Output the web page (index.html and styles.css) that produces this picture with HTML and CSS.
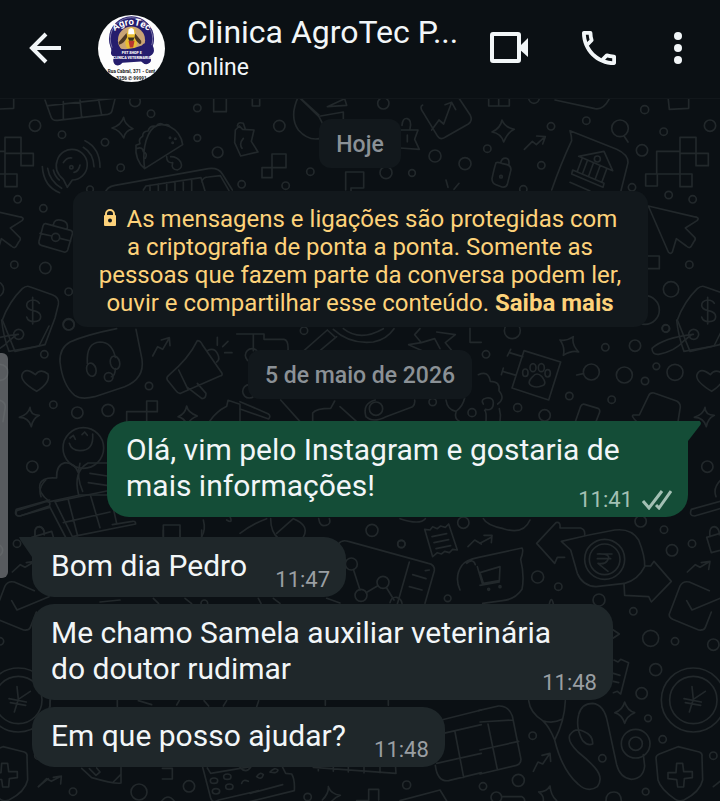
FILE: index.html
```html
<!DOCTYPE html>
<html lang="pt-BR">
<head>
    <meta charset="UTF-8">
    <meta name="viewport" content="width=device-width, initial-scale=1.0">
    <title>Clinica AgroTec</title>
    <link rel="stylesheet" href="styles.css">
</head>
<body>
    <div class="app">
        <!-- wallpaper: one set of doodles, repeated to the left -->
        <svg class="wallpaper" viewBox="0 0 2160 2403" preserveAspectRatio="xMidYMid slice" aria-hidden="true">
            <g id="doodles">
                <!-- top left -->
                <g transform="translate(0 270)">
                    <path d="M135 30l18 50q5 13 20 11l150-18q12-2 14-14l10-40M190 35v55M240 30l5 52M295 25l10 50M145 47l195-22"/>
                    <circle cx="405" cy="34" r="16"/><circle cx="453" cy="71" r="11"/><circle cx="592" cy="54" r="11"/>
                    <path d="M641 20h38v45h-38z"/>
                    <circle cx="186" cy="134" r="11"/><circle cx="315" cy="157" r="11"/>
                    <path d="M371 82q3 22 28 34q-24 6-28 28q-12-24-35-30q28-8 35-32z"/>
                    <path d="M190 268q-30-25-18-58a46 46 0 1 1 45 60l-15 22zM190 218q10-16 25-14M240 225q-4 20-18 22M127 230q4 60 52 78M143 235q6 38 42 60M160 240q5 20 18 30M255 152q45 22 45 80M250 172q30 18 32 58"/>
                    <circle cx="214" cy="232" r="5"/>
                    <path d="M434 236L548 164q-5-38-38-54q-60-25-76 60q-5 30 0 66zM434 236q-30-25-26-70l12-5q-6-14 8-22q0-16 16-16q6-18 24-14q10-14 24-4q14-4 18 6M412 175q16-5 18 10q14 5 6 20"/>
                    <circle cx="510" cy="143" r="2"/><circle cx="526" cy="146" r="2"/><circle cx="518" cy="158" r="2"/>
                    <path d="M500 200q0 20 18 18q-6 20 14 22q18-6 10-24q-10-16-30-16"/>
                    <circle cx="592" cy="144" r="10"/><circle cx="653" cy="187" r="16"/><circle cx="362" cy="233" r="11"/><circle cx="270" cy="298" r="10"/>
                    <path d="M315 310q5-20 30-24l280-50q30-4 42 16l30 48M430 300l8-12 165-25 12 40M450 286v20M475 282v22M500 278v24M525 275v28M550 271v30M575 267v36M605 275q5-14 20-14l36-4 26 45"/>
                    <circle cx="130" cy="355" r="11"/>
                    <path d="M137 401l75 20q7 3 5 11l-14 48q-3 8-11 6l-68-20q-9-3-7-12l12-46q2-8 8-7zM160 405q2-20 26-14q20 4 16 26M120 430l35 8M180 445l32 8"/>
                    <circle cx="167" cy="442" r="12"/><circle cx="136" cy="534" r="17"/><circle cx="206" cy="605" r="11"/><circle cx="206" cy="703" r="17"/>
                </g>
                <!-- top middle -->
                <g transform="translate(720 270)">
                    <path d="M37 20v28h22V20M262 50l52-24 6 20zM175 20q-28 60 0 100q40 45 90 15l-28-55zM237 75l-55-50M242 78l68-12v60l-60 18"/>
                    <circle cx="430" cy="40" r="17"/><circle cx="118" cy="108" r="17"/>
                    <path d="M548 45q-10 5 0 20l45 74q8 12 22 3l70-40q14-10 6-26l-40-60M575 120l22-30 14 12 24-65M615 44l20-7 12 22"/>
                    <path d="M-14 120l12-12 10 10 34 2-8 34 20 32-52 12-18-40zM-8 108q2-14 18-8l6 18M10 145q-14 16-4 30"/>
                    <path d="M480 120l54 0-10 28 14 30-58-4M486 106q2-24 16-20q14 4 8 30M502 135v20"/>
                    <path d="M96 192h42v41H96zM66 233h30v30H66zM317 300v-54h54v48h-38v20"/>
                    <circle cx="211" cy="245" r="11"/><circle cx="137" cy="287" r="11"/><circle cx="5" cy="283" r="11"/><circle cx="438" cy="248" r="18"/><circle cx="585" cy="198" r="18"/><circle cx="675" cy="221" r="18"/><circle cx="516" cy="249" r="10"/>
                    <path d="M618 270l6 22M642 298l15-18"/>
                </g>
                <!-- top right -->
                <g transform="translate(1440 270)">
                    <path d="M26 20v28h62V20M56 20v28M225 30l120 26q25 4 42-28M564 20l4 38 58-3V20"/>
                    <circle cx="162" cy="24" r="16"/><circle cx="494" cy="59" r="12"/><circle cx="319" cy="92" r="11"/><circle cx="213" cy="109" r="11"/><circle cx="22" cy="176" r="11"/><circle cx="184" cy="226" r="11"/>
                    <path d="M66 90q8 22 37 28q-20 8-32 38q-8-26-35-30q26-12 30-36z"/>
                    <path d="M133 178l24-24 12 10 26-24M170 138l26 2-8 22"/>
                    <path d="M48 218q-6 18-12 48q0 14 12 18l18 7q12 2 16-8l11-44q0-12-12-15l-16-4q-12-4-17-2zM62 218q4-16 18-13q10 4 6 22"/>
                    <circle cx="63" cy="260" r="4"/><circle cx="130" cy="298" r="11"/>
                    <path d="M215 300q28-80 60-148q0-14-5-30l140 56q35 16 34 40l-22 88M270 277l60 26M296 199l76-15 26 58zM278 240l94 40-3 12-94-40zM306 206l-14 38M322 212l-14 38M340 220l-14 38M360 228l-14 38M380 237l-14 38"/>
                    <circle cx="352" cy="207" r="9"/>
                    <circle cx="420" cy="115" r="25"/><path d="M432 138l12 18"/>
                    <circle cx="551" cy="125" r="11"/><circle cx="690" cy="107" r="17"/><circle cx="486" cy="181" r="17"/><circle cx="456" cy="292" r="11"/>
                    <path d="M530 252v-68h70v68M600 142h48v48h-48zM648 190h37v37h-37zM497 252h35v36h-35zM600 184v106h36v-38H530"/>
                    <circle cx="566" cy="315" r="11"/><circle cx="638" cy="328" r="11"/>
                    <path d="M505 348l136 32q20 2 10 12l-35 22 28 28q5 6-3 14l-8 14q-6 6-14-2l-30-22-12 40q-5 8-12 0z"/>
                    <path d="M500 498h38v38h-38"/>
                    <circle cx="628" cy="524" r="11"/><circle cx="573" cy="598" r="23"/><circle cx="495" cy="660" r="43"/>
                    <path d="M592 690q20-55 60-94q12-10 22-6l68 24q22 8 18 30l-10 40-30 80-90 20z"/>
                    <path d="M703 640q-6-10-20-10q-18 2-18 16q0 12 20 16q22 4 22 18q0 14-20 15q-18 0-22-14M683 622v80"/>
                    <circle cx="558" cy="716" r="11"/>
                </g>
                <!-- middle left -->
                <g transform="translate(0 960)">
                    <circle cx="206" cy="14" r="16"/><circle cx="133" cy="103" r="11"/><circle cx="160" cy="254" r="11"/><circle cx="232" cy="278" r="17"/><circle cx="324" cy="271" r="18"/><circle cx="447" cy="198" r="11"/><circle cx="140" cy="367" r="11"/>
                    <path d="M350 26q-90 18-140 40q-32 18-30 60q8 70 44 100q20 14 60 4l90-30q60-24 52-82l-18-90M262 130q-4-62 38-64q36 0 46 46M346 146q0 20-12 24"/>
                    <ellipse cx="274" cy="149" rx="14" ry="20" transform="rotate(-15 274 149)"/><ellipse cx="345" cy="128" rx="14" ry="20" transform="rotate(-15 345 128)"/><circle cx="326" cy="171" r="13"/>
                    <path d="M458 108l15-28 15 8 20-34M484 60l24-7 2 24"/>
                    <path d="M592 62q10 0 16 14l58 84q2 8-6 8l-118 52q-8 2-14-8l-26-32q-4-8 4-14q60-50 86-104zM536 150l28 58M562 202l44 34q12 0 12-16l-26-30M622 92q20-10 30 8q10 18-2 26M652 52v24M668 80l16-16M674 98h22"/>
                    <path d="M380 305v-30h60v-32h32v32h-32v30M560 258q4 20 32 30q-20 8-26 20M560 258q-4 24-26 32q20 6 24 20M628 305q20-30 52-46l4-18 36 12v52"/>
                    <circle cx="250" cy="384" r="61"/><path d="M208 370q6 22 32 22q42 0 38-50M210 354l10-8 6 12M246 344l8-8 8 10"/>
                    <path d="M148 544q-36-26-28-52q8-22 50-18q-2-40 26-46q28 0 40 32M236 525q-18-70 28-96h60M240 430q-12 40 8 84M270 460l52 8M265 488l55 8M150 545l90-20 90 0"/>
                    <path d="M50 572l90-28q14 2 8 14l-88 30q-16 2-10-16zM148 558l50 96M165 545l52 105 190-38q0-10-10-8l-60 10M165 545l170-35M190 608l140-32M205 540l28 108M272 528l28 95M330 520l20 90"/>
                    <path d="M490 650v-35h50v35M610 600q8 30-5 50M680 600q20 12 10-10"/>
                </g>
                <!-- centre -->
                <g transform="translate(720 960)">
                    <path d="M-10 42h82v16h60q14 2 12 34M40 42v50M262 30l-70 62M290 50l-50 42M262 30l24 22M280 28q50 46 120 38q40-8 62-40M310 26q50 40 120 0M540 26l-16 18 20 24-38 6 44 20M544 68l40-12 16 30M590 36l56 8-30 24 20 24M690 25v42h34"/>
                    <circle cx="192" cy="32" r="11"/><circle cx="36" cy="106" r="20"/><circle cx="28" cy="214" r="20"/>
                    <path d="M0 245l84 36q10 6 2 16l-86-30M122 240l58 65M218 305v-26q10-14 54-14l12-22M300 260l50 45M378 290q-12-40 28-50M378 290q20 20 60 0l80-30q8-8 6-20"/>
                    <circle cx="408" cy="266" r="20"/><circle cx="578" cy="246" r="11"/><path d="M618 240q4 30 30 34q20-14 26-40M648 276q-6 20 10 28"/><circle cx="696" cy="278" r="12"/>
                    <path d="M0 640q40-30 80-44M92 596q0 40 24 60M110 640l50-44q50 20 30 55M236 596q4 26 22 20q16-4 10-20M480 596q60 20 76 0"/>
                    <circle cx="396" cy="631" r="18"/><circle cx="484" cy="672" r="11"/><circle cx="670" cy="608" r="17"/>
                    <path d="M554 628l16 2 8-10 14 6 10-8 14 4 10-10 26 78-14-2-10 10-14-4-10 8-12-4-14 12zM576 650l44-9M582 668l44-9M588 686l44-9"/>
                </g>
                <!-- middle right -->
                <g transform="translate(1440 960)">
                    <circle cx="97" cy="32" r="24"/><circle cx="18" cy="103" r="11"/><circle cx="376" cy="82" r="11"/><circle cx="465" cy="77" r="17"/><circle cx="557" cy="25" r="11"/><circle cx="529" cy="139" r="10"/><circle cx="495" cy="183" r="11"/><circle cx="585" cy="157" r="24"/><circle cx="433" cy="165" r="24"/><circle cx="334" cy="156" r="24"/><circle cx="268" cy="228" r="11"/><circle cx="395" cy="239" r="11"/><circle cx="113" cy="263" r="12"/><circle cx="194" cy="286" r="17"/><circle cx="682" cy="440" r="17"/>
                    <path d="M132 92l110 34-36 114-110-36zM92 88l-10 20M88 98l40 12M70 144l-6 20M68 154l40 12M290 165l20-4M240 60q20 4 40-10q-6 24 16 46q-20-6-46 10q6-24-10-46"/>
                    <ellipse cx="159" cy="143" rx="9" ry="12"/><ellipse cx="184" cy="143" rx="9" ry="12"/><ellipse cx="136" cy="158" rx="8" ry="11"/><ellipse cx="203" cy="160" rx="8" ry="11"/>
                    <path d="M158 170q12-16 28 0q18 24-2 28q-14 6-28 0q-18-8 2-28z"/>
                    <path d="M590 0q5 50 22 94l90-16 30-60M640 43q-90 10-124 42q0 20 20 18q50-10 75-40l25-20"/><circle cx="641" cy="43" r="15"/>
                    <path d="M695 214q-50-30-44-50q10-24 40 0q16-20 38-2q8 26-34 52z"/>
                    <path d="M-5 164q30-14 36 20q30 0 26 28q20 24-4 40M16 268q24 6 24-20q0-16-20-14q-20 4-10 18M18 305q2-30-4-34M58 266q6 20 2 39"/>
                    <path d="M286 305l16-46q4-8 12-6l40 12q8 4 4 14l-10 26M470 305q-18-18-10-20l18 0 28-58q4-10 16-8l68 24q14 8 10 24l-6 38M675 262q-4 20-32 30q28 0 36 28q4-24 24-34q-28 0-28-24M722 480q-24 24-14 50M634 568l100-28M634 568q-8 20 10 20l90-26"/>
                    <path d="M10 596q10 20 60 30q60 20 80-26M0 670l34-18M12 646l24 0-2 22M170 670l58-62q14-4 12 16l62 0q14 4 12 22M170 670l54 60 8-18 22 0"/>
                    <path d="M244 664q80-20 160-34q50-6 72 30q20 50 18 80q-20 40-60 50l-86 10q-40-2-56-40l-20-70z"/><circle cx="374" cy="718" r="60"/><circle cx="374" cy="718" r="46"/>
                    <path d="M352 702h44M352 716h40M352 702q46-2 30 20q-8 12-28 8l30 24"/>
                    <circle cx="482" cy="604" r="17"/><circle cx="552" cy="629" r="11"/><circle cx="576" cy="691" r="17"/><circle cx="636" cy="671" r="11"/>
                    <path d="M680 652l60-18 14 48-60 16zM690 650q-4-30 14-30q14 4 14 24"/>
                </g>
                <!-- bottom left -->
                <g transform="translate(0 1590)">
                    <path d="M105 20q-4-30 14-30q14 4 14 20M490 0v20M540 0v20M605 0v20M300 216l60-6M460 205l16 16M555 205l20 16M150 510v20M352 510v20M415 512l40 12M530 525l8-14M612 512l14 16M680 512l-10 16"/>
                    <circle cx="613" cy="220" r="10"/>
                    <path d="M245 715l30 28q70 20 88 16l0-46M268 716l20 20 12-10-10-12M340 756l22-22M487 715h30v32h-30M116 770l24-24 14 8 30-16M160 742l24-4-2 24"/>
                    <circle cx="219" cy="785" r="11"/><circle cx="417" cy="786" r="24"/><circle cx="567" cy="769" r="17"/>
                    <path d="M608 712l24 92q6 18 24 6l120-28M622 714l10 16 120-20"/><ellipse cx="642" cy="752" rx="11" ry="8"/><ellipse cx="682" cy="740" rx="11" ry="8"/><ellipse cx="648" cy="784" rx="11" ry="8"/><ellipse cx="688" cy="770" rx="11" ry="8"/>
                    <path d="M486 812q18-22 36 0"/>
                </g>
                <!-- bottom middle -->
                <g transform="translate(720 1590)">
                    <path d="M295 42q10-14 30-8l240 66q20 4 18 22l-28 98M508 96l-36 126M340 118l20 62M378 188l34-20M440 174l22 36M518 134l40 12M508 170l38 10M556 122l12-2"/>
                    <circle cx="334" cy="102" r="18"/><circle cx="363" cy="196" r="18"/><circle cx="429" cy="157" r="18"/><path d="M450 218q4-18 20-16q14 4 16 18"/>
                    <circle cx="484" cy="42" r="11"/><circle cx="623" cy="205" r="10"/>
                    <path d="M684 50l20-20 20 12M55 205l8 15M100 205l20 15M260 205l40 14M50 530l6-18M256 510v16M445 510v16M604 570l120-30M610 610l114-26M645 606l26 136M590 700l134-30M586 706q6 50 40 46l98-24"/>
                    <path d="M220 712l248 18-2-30M235 710v12M280 710v14M325 710v16M372 710v18M420 706v22M5 760q4-14 20-6M0 712q18 20 32 0M50 740q10-16 20-6q-6 18-20 6M90 726q14-16 24-6q-2 12-24 6M125 706l12 24 18 2q10 16 8 50L0 822M30 790l98-26"/>
                    <circle cx="500" cy="765" r="12"/><circle cx="203" cy="801" r="11"/>
                    <path d="M265 770q8 22 36 26q-26 10-36 34M265 770q2 20-18 40M386 812v-34h30v32M350 812h36M480 812l120-32 22 36"/>
                </g>
                <!-- bottom right -->
                <g transform="translate(1440 1590)">
                    <path d="M-60 180q-18-40 6-74q10-16 50-24l130-28q6 8-4 34q12 50 4 90q-20 30-58 34l-60 8M-40 100q20-16 26 4M0 128l60-18-2 42-48 8zM-8 110l16 54M0 166l58-10"/>
                    <circle cx="26" cy="178" r="3"/><circle cx="60" cy="170" r="3"/>
                    <circle cx="173" cy="141" r="18"/><circle cx="235" cy="170" r="11"/><circle cx="357" cy="210" r="18"/><circle cx="460" cy="244" r="11"/><circle cx="512" cy="325" r="24"/><circle cx="585" cy="334" r="11"/><circle cx="700" cy="344" r="17"/><circle cx="527" cy="419" r="18"/><circle cx="485" cy="490" r="17"/><circle cx="504" cy="565" r="10"/><circle cx="548" cy="628" r="11"/><circle cx="367" cy="685" r="11"/><circle cx="158" cy="617" r="11"/><circle cx="115" cy="751" r="18"/><circle cx="9" cy="769" r="11"/><circle cx="497" cy="785" r="10"/><circle cx="700" cy="677" r="11"/>
                    <path d="M208 222q6-26 12 0M432 160l2 36 72 4 8 16 60-62-52-60-10 14h-18M622 126l24-22 14 8 30-18M664 98l26-4-4 24"/>
                    <path d="M688 182l-60-26q-20-4-28 12l-32 84q-2 10 10 16l78 32q16 2 20-8l18-46M620 212l16 28 96-40"/>
                    <path d="M400 300l18 12-18 12M402 390l12 6 8-8 24 10-24 94-10-8-12 4M400 430l20 6M400 454l16 4"/>
                    <circle cx="640" cy="510" r="96"/><circle cx="640" cy="510" r="71"/>
                    <path d="M636 470l4 38 36-24M640 508l-12 38M612 506l52 10M616 518l46 8"/>
                    <path d="M434 516q8 26 30 32q-24 10-30 32q-8-26-30-32q24-8 30-32z"/>
                    <path d="M146 512q4 36 42 60q20 18 36 58q22 90 70 132q30 28 58 8q20-26-8-58q-20-22-50-46q-34-34-24-52q16-22 40-10q30 12 28 38q-16 6-30-10q-22-40-12-78q8-34 42-34q34 4 44 54l28 130q10 40 44 44q36-2 40-40l-4-34M256 512q-2 60-32 118M188 572q30 10 58-4"/>
                    <circle cx="467" cy="641" r="43"/><circle cx="467" cy="641" r="20"/>
                    <path d="M594 650l64 16q10 4 8 14l2 70q-8 36-56 60q-14 6-26-2q-44-30-52-58l-6-66q0-8 10-12z"/>
                    <path d="M590 700h18l3 25 26 0v18l-24 3-2 25h-18l-3-22-26-3v-18h24z"/>
                    <path d="M-5 542l60-14q30-2 42 30l26 130q0 14-14 18L0 732M0 576l100-6M0 660l116-26M24 582l28 136M160 724l14-28 14 6 22-32M186 676l24-6 2 24"/>
                    <path d="M176 786q24 0 34-18q2 28 20 44M176 786q16 10 14 26M66 800h60q8 4 8 12M700 770l30-24"/><circle cx="49" cy="802" r="16"/><path d="M378 812q0-26 24-26q20 0 22 26"/>
                </g>
            </g>
            <use href="#doodles" x="-2025"/>
        </svg>

        <header class="topbar">
            <button class="icon-btn" aria-label="Voltar">
                <svg width="36" height="36" viewBox="0 0 36 36" fill="none" stroke="#f2f6f8" stroke-width="4"><path d="M33 18H5M18 4L4 18l14 14"/></svg>
            </button>
            <svg class="avatar" viewBox="0 0 202 202" role="img" aria-label="AgroTec">
                <defs>
                    <clipPath id="round"><circle cx="101" cy="101" r="101"/></clipPath>
                    <path id="arc" d="M48 50Q101 10 154 50"/>
                </defs>
                <g clip-path="url(#round)">
                    <path fill="#fdfdfd" d="M0 0h202v202H0z"/>
                    <circle cx="101" cy="72" r="68" fill="#251d6d"/>
                    <circle cx="101" cy="72" r="64" fill="none" stroke="#a9a3c4" stroke-width="2"/>
                    <circle cx="101" cy="76" r="41" fill="#c9a475"/>
                    <path fill="#e8bd32" d="M90 44q10-14 22 0l6 38q-2 22-18 26q-16-4-18-24z"/>
                    <path fill="#fff" d="M92 44q9-10 16 0l2 14H91z"/>
                    <path fill="#4c3825" d="M86 54L62 82l2 8q18-8 24-24zM112 56l18 22q2 10-4 10q-12-8-16-20z"/>
                    <path fill="#b93630" d="M92 78h18l-4 20h-10z"/>
                    <path fill="#393023" d="M90 68h20l-4 10H94z"/>
                    <path fill="#251d6d" d="M54 96q-16 0-14 12q-4 14 8 18q-6 16 4 24q12 6 22-6l56-4q14 14 26 4q8-8 0-20q16-8 12-24q-4-14-18-10q-8-10-18 2q-32 14-64 10q-2-8-14-6z"/>
                    <text class="logo-title"><textPath href="#arc" startOffset="50%">AgroTec</textPath></text>
                    <text class="logo-band" x="102" y="118">PET SHOP E</text>
                    <text class="logo-band" x="102" y="132">CLINICA VETERINARIA</text>
                    <text class="logo-addr" x="101" y="174">Rua Cabral, 371 - Cent</text>
                    <text class="logo-addr" x="101" y="195">3256 ✆ 99991</text>
                </g>
            </svg>
            <div class="contact">
                <h1 class="contact-name">Clinica AgroTec P...</h1>
                <p class="contact-status">online</p>
            </div>
            <button class="icon-btn video" aria-label="Chamada de vídeo">
                <svg width="38" height="32" viewBox="0 0 38 32"><rect x="2" y="2" width="27" height="27" rx="1" fill="none" stroke="#f2f6f8" stroke-width="4"/><path fill="#f2f6f8" d="M28 16l10-10v19z"/></svg>
            </button>
            <button class="icon-btn phone" aria-label="Ligar">
                <svg width="34" height="34" viewBox="3 3 18 18" fill="#f2f6f8"><path d="M6.540 5c.06.89.21 1.76.45 2.590l-1.200 1.200c-.41-1.200-.67-2.470-.76-3.790h1.510m9.860 12.020c.85.24 1.720.39 2.600.45v1.490c-1.320-.09-2.590-.35-3.800-.75l1.200-1.190M7.500 3H4c-.55 0-1 .45-1 1 0 9.390 7.610 17 17 17 .55 0 1-.45 1-1v-3.490c0-.55-.45-1-1-1-1.240 0-2.450-.2-3.570-.57-.1-.04-.21-.05-.31-.05-.26 0-.51.1-.71.29l-2.200 2.200c-2.830-1.450-5.150-3.760-6.590-6.590l2.200-2.200c.28-.28.36-.67.25-1.020C8.700 6.450 8.500 5.250 8.500 4c0-.55-.45-1-1-1z"/></svg>
            </button>
            <button class="icon-btn" aria-label="Mais opções">
                <svg width="36" height="36" viewBox="0 0 36 36" fill="#f2f6f8"><circle cx="18" cy="6" r="4"/><circle cx="18" cy="18" r="4"/><circle cx="18" cy="30" r="4"/></svg>
            </button>
        </header>

        <main class="chat">
            <div class="date">Hoje</div>
            <p class="notice">
                <svg class="lock" width="14" height="18" viewBox="0 0 14 18"><path fill="none" stroke="#fdd27a" stroke-width="2" d="M3 8V5a4 4 0 0 1 8 0v3"/><path fill="#fdd27a" fill-rule="evenodd" d="M2 6h10q1 0 1 1v9q0 1-1 1H2q-1 0-1-1V7q0-1 1-1zm5 3.5a2 2 0 1 0 0 4a2 2 0 0 0 0-4z"/></svg>
                As mensagens e ligações são protegidas com a criptografia de ponta a ponta. Somente as pessoas que fazem parte da conversa podem ler, ouvir e compartilhar esse conteúdo. <a href="#">Saiba mais</a>
            </p>
            <div class="date">5 de maio de 2026</div>

            <div class="messages">
                <div class="bubble out tail">
                    <p class="text">Olá, vim pelo Instagram e gostaria de mais informações!</p>
                    <div class="meta">
                        <time>11:41</time>
                        <svg width="30" height="20" viewBox="0 0 30 20" fill="none" stroke="#a3c0b4" stroke-width="3"><path d="M1 11l6 7L20 1M14 15l3 3L29 1"/></svg>
                    </div>
                </div>
                <div class="bubble in tail">
                    <p class="text">Bom dia Pedro<span class="spacer"></span></p>
                    <div class="meta"><time>11:47</time></div>
                </div>
                <div class="bubble in">
                    <p class="text">Me chamo Samela auxiliar veterinária do doutor rudimar<span class="spacer"></span></p>
                    <div class="meta"><time>11:48</time></div>
                </div>
                <div class="bubble in">
                    <p class="text">Em que posso ajudar?<span class="spacer"></span></p>
                    <div class="meta"><time>11:48</time></div>
                </div>
            </div>
        </main>
        <div class="scroll-thumb"></div>
    </div>
</body>
</html>
```
FILE: styles.css
```css
body {
    margin: 0;
    background-color: #0b1014;
    color: #f2f6f8;
    font-family: Roboto, "Noto Sans", sans-serif;
}
h1, p {
    margin: 0;
    font-weight: 400;
}
.app {
    position: relative;
    min-height: 100vh;
    overflow: hidden;
}
.wallpaper {
    position: absolute;
    top: 0;
    left: 0;
    width: 100%;
    height: 100%;
    fill: none;
    stroke: #22282b;
    stroke-width: 5;
    stroke-linecap: round;
    stroke-linejoin: round;
}

/* top bar */
.topbar {
    position: relative;
    display: flex;
    align-items: center;
    box-sizing: border-box;
    height: 99px;
    padding: 0 24px 2px 28px;
    background-color: #0b1014;
    border-bottom: 1px solid #12171b;
}
.icon-btn {
    display: flex;
    padding: 0;
    border: none;
    background: none;
    cursor: pointer;
}
.avatar {
    flex: none;
    width: 67px;
    height: 67px;
    margin-left: 34px;
}
.logo-title {
    fill: #fff;
    font-size: 29px;
    font-weight: 700;
    text-anchor: middle;
}
.logo-band {
    fill: #fff;
    font-size: 11px;
    font-weight: 900;
    text-anchor: middle;
}
.logo-addr {
    fill: #333;
    font-size: 14px;
    font-weight: 900;
    text-anchor: middle;
}
.contact {
    flex: 1;
    min-width: 0;
    margin-left: 22px;
    white-space: nowrap;
}
.contact-name {
    font-size: 32px;
    line-height: 40px;
}
.contact-status {
    font-size: 23px;
    line-height: 32px;
}
.video {
    margin-right: 54px;
}
.phone {
    margin-right: 44px;
}

/* conversation */
.chat {
    position: relative;
    display: flex;
    flex-direction: column;
    align-items: center;
    gap: 23px;
    padding: 20px 32px 32px;
}
.date {
    padding: 3px 17px 0;
    border-radius: 12px;
    background-color: #12181c;
    color: #8b9196;
    font-size: 23px;
    font-weight: 500;
    line-height: 46px;
}
.notice {
    box-sizing: border-box;
    max-width: 575px;
    padding: 14px 24px 10px;
    border-radius: 14px;
    background-color: #12181c;
    color: #fdd27a;
    font-size: 24px;
    line-height: 28px;
    text-align: center;
}
.notice a {
    color: inherit;
    font-weight: 700;
    text-decoration: none;
}
.lock {
    margin-right: 4px;
}
.messages {
    display: flex;
    flex-direction: column;
    align-items: flex-start;
    gap: 7px;
    width: 100%;
    margin-top: -1px;
}
.bubble {
    position: relative;
    display: grid;
    box-sizing: border-box;
    max-width: 581px;
    padding: 11px 16px 13px 19px;
    border-radius: 22px;
}
.text, .meta {
    grid-area: 1 / 1;
}
.text {
    padding-right: 8px;
    font-size: 30px;
    line-height: 36px;
}
.spacer {
    display: inline-block;
    width: 75px;
}
.meta {
    display: flex;
    align-items: center;
    gap: 9px;
    align-self: end;
    justify-self: end;
    margin-bottom: -9px;
    color: #9a9fa3;
    font-size: 22px;
    line-height: 26px;
}
.in {
    background-color: #1f272a;
}
.out {
    align-self: flex-end;
    margin-bottom: 13px;
    background-color: #144d37;
}
.out .meta {
    color: #a3c0b4;
}
.tail::before {
    content: "";
    position: absolute;
    top: 0;
    width: 13px;
    height: 20px;
    background-color: inherit;
}
.in.tail {
    border-top-left-radius: 0;
}
.in.tail::before {
    right: 100%;
    clip-path: polygon(0 0, 100% 0, 100% 100%, 10% 15%);
}
.out.tail {
    border-top-right-radius: 0;
}
.out.tail::before {
    left: 100%;
    clip-path: polygon(0 0, 90% 0, 100% 10%, 95% 20%, 0 100%);
}
.scroll-thumb {
    position: absolute;
    top: 353px;
    left: 0;
    width: 8px;
    height: 225px;
    border-radius: 0 6px 6px 0;
    background-color: rgba(140, 141, 145, 0.6);
}
```
